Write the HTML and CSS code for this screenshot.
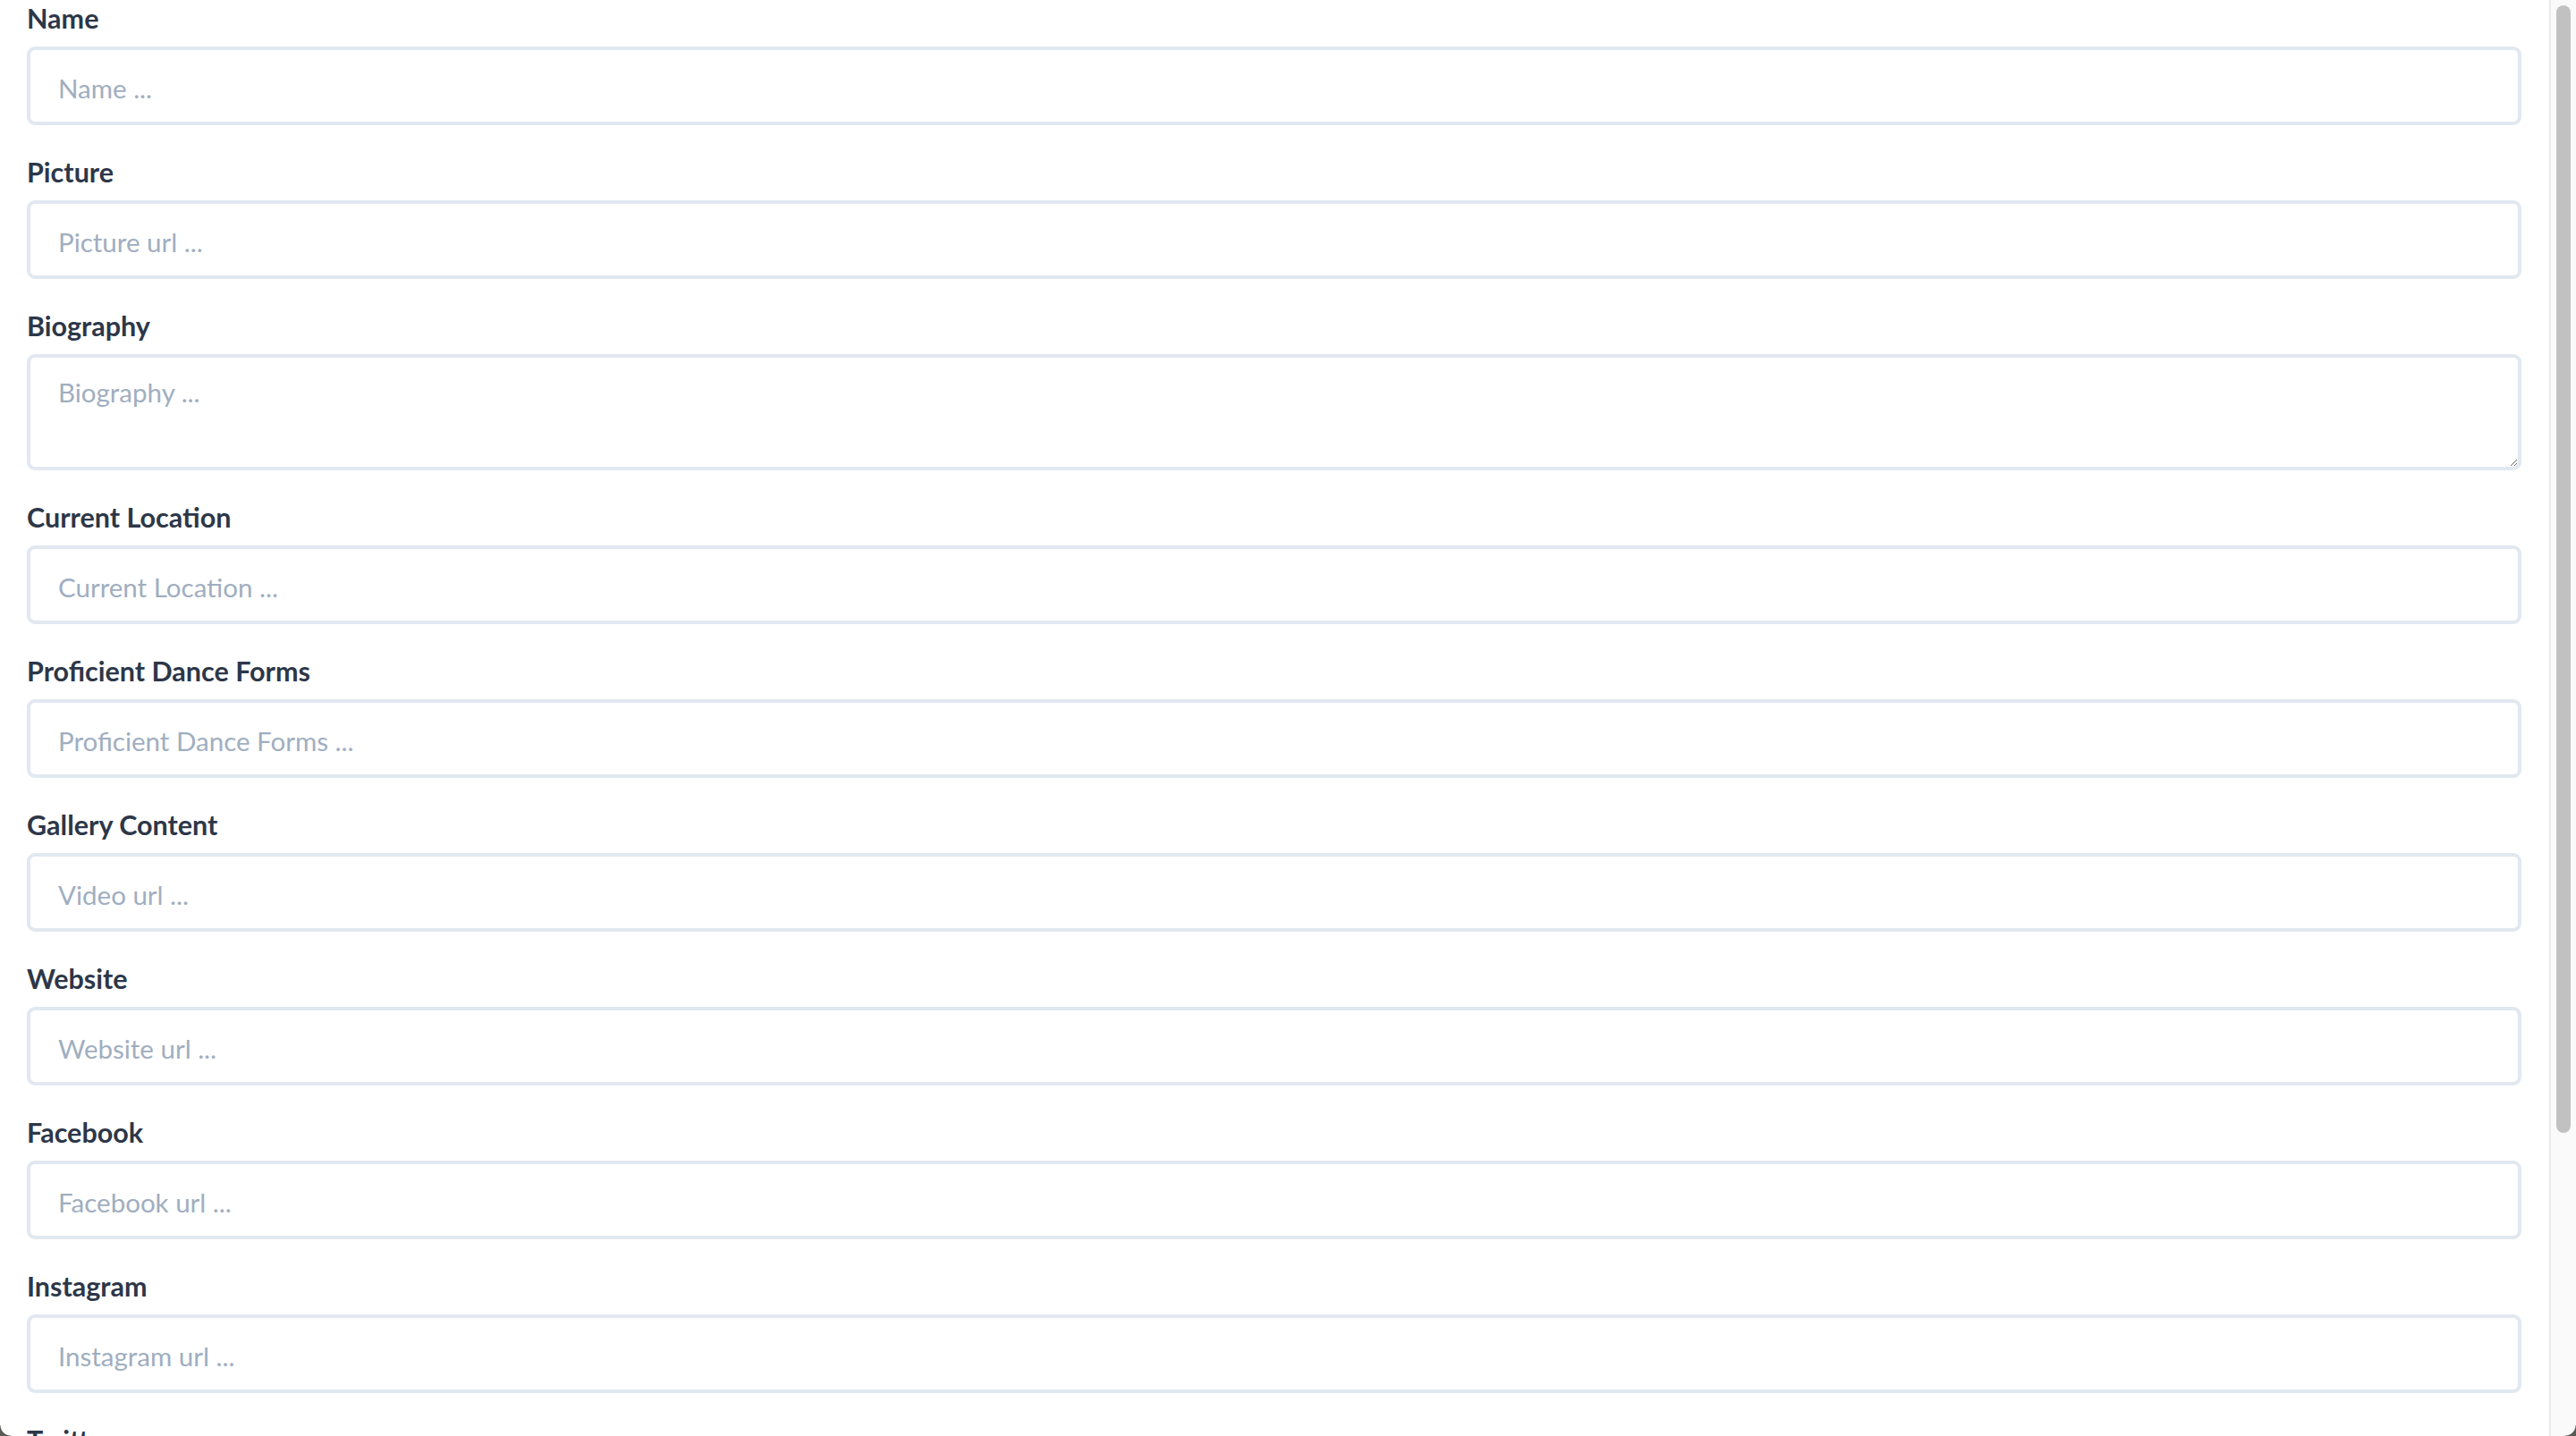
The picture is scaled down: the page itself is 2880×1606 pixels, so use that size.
FILE: index.html
```html
<!DOCTYPE html>
<html lang="en">
<head>
<meta charset="utf-8">
<title>Profile form</title>
<link rel="stylesheet" href="styles.css">
</head>
<body>
<div class="page">
  <form class="form">
    <div class="field">
      <label class="label" for="name">Name</label>
      <input class="input" id="name" type="text" placeholder="Name ...">
    </div>
    <div class="field">
      <label class="label" for="picture">Picture</label>
      <input class="input" id="picture" type="text" placeholder="Picture url ...">
    </div>
    <div class="field">
      <label class="label" for="bio">Biography</label>
      <textarea class="input textarea" id="bio" placeholder="Biography ..."></textarea>
    </div>
    <div class="field">
      <label class="label" for="loc">Current Location</label>
      <input class="input" id="loc" type="text" placeholder="Current Location ...">
    </div>
    <div class="field">
      <label class="label" for="forms">Proficient Dance Forms</label>
      <input class="input" id="forms" type="text" placeholder="Proficient Dance Forms ...">
    </div>
    <div class="field">
      <label class="label" for="gallery">Gallery Content</label>
      <input class="input" id="gallery" type="text" placeholder="Video url ...">
    </div>
    <div class="field">
      <label class="label" for="web">Website</label>
      <input class="input" id="web" type="text" placeholder="Website url ...">
    </div>
    <div class="field">
      <label class="label" for="fb">Facebook</label>
      <input class="input" id="fb" type="text" placeholder="Facebook url ...">
    </div>
    <div class="field">
      <label class="label" for="ig">Instagram</label>
      <input class="input" id="ig" type="text" placeholder="Instagram url ...">
    </div>
    <div class="field">
      <label class="label" for="tw">Twitter</label>
      <input class="input" id="tw" type="text" placeholder="Twitter url ...">
    </div>
  </form>
</div>
<div class="scrollbar" aria-hidden="true">
  <div class="thumb"></div>
</div>
<div class="corner corner-left"></div>
<div class="corner corner-right"></div>
</body>
</html>
```

FILE: styles.css
```css
html, body {
  margin: 0;
  padding: 0;
  height: 100%;
  background: #ffffff;
}

body {
  display: flex;
  font-family: Lato, "Noto Sans", sans-serif;
  color: #2d3748;
  overflow: hidden;
}

.page {
  flex: 1;
  min-width: 0;
  height: 100vh;
  overflow: hidden;
  background: #ffffff;
}

.scrollbar {
  flex: 0 0 30px;
  box-sizing: border-box;
  height: 100vh;
  padding: 6px 6px 0 6px;
  background: #fafafa;
  border-left: 2px solid #ebebeb;
}

.thumb {
  width: 16px;
  height: 1261px;
  border-radius: 8px;
  background: #c1c1c1;
}

.form {
  display: flex;
  flex-direction: column;
  padding: 0 31px 0 30px;
}

.field {
  display: flex;
  flex-direction: column;
  margin-bottom: 32px;
}

.label {
  display: block;
  font-size: 30.5px;
  line-height: 40px;
  font-weight: 700;
  color: #2d3748;
  margin-bottom: 12px;
}

.input {
  box-sizing: border-box;
  width: 100%;
  height: 88px;
  margin: 0;
  padding: 18px 31px 14px;
  border: 4px solid #e2e8f0;
  border-radius: 9px;
  background: #ffffff;
  font-family: Lato, "Noto Sans", sans-serif;
  font-size: 29.5px;
  line-height: 48px;
  color: #4a5568;
  outline: none;
}

.input::placeholder {
  color: #a0aec0;
  opacity: 1;
}

.textarea {
  height: 130px;
  padding-top: 15px;
  resize: vertical;
}

.corner {
  position: fixed;
  bottom: 0;
  width: 12px;
  height: 12px;
}

.corner-left {
  left: 0;
  background: radial-gradient(circle at 12px 0, transparent 11px, #5a5a55 12px);
}

.corner-right {
  right: 0;
  background: radial-gradient(circle at 0 0, transparent 11px, #5a5a55 12px);
}
```
